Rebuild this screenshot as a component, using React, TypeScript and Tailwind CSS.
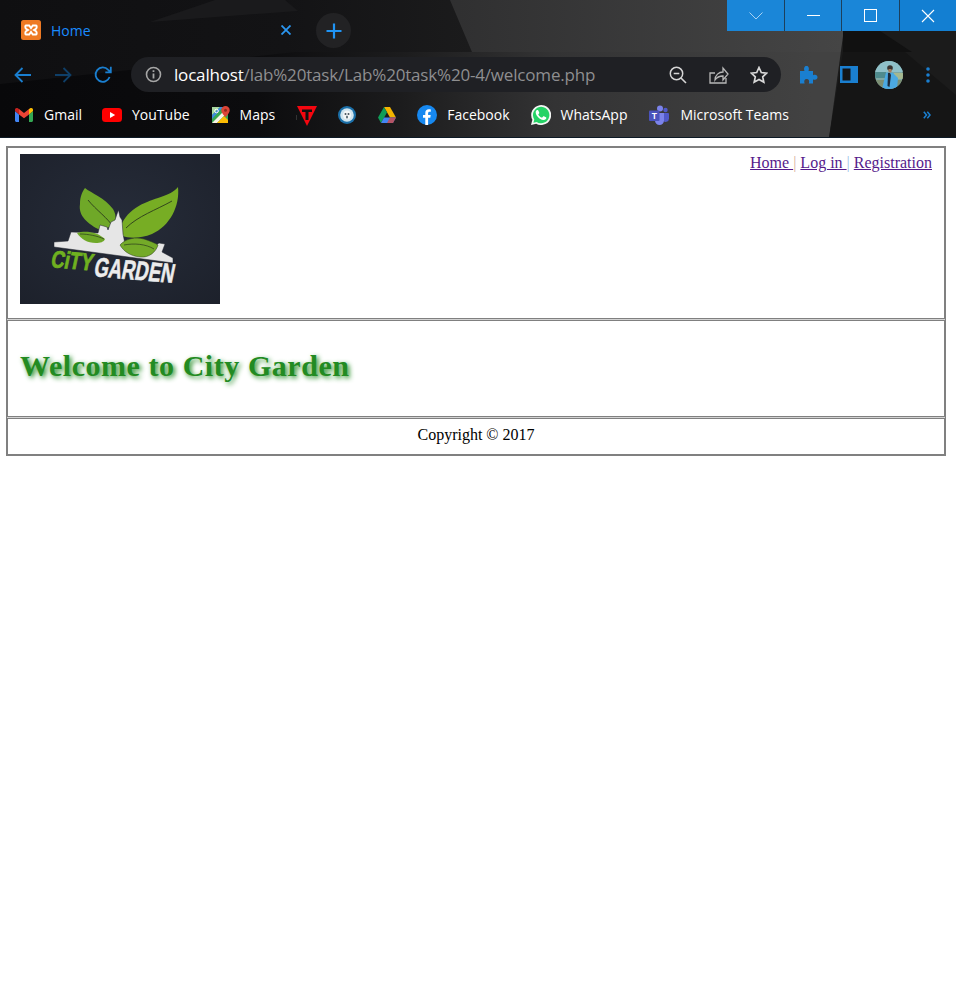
import React from "react";

const uiFont = "font-['Open_Sans','Noto_Sans',sans-serif]";

function Backdrop() {
  return (
    <svg className="absolute inset-0" width="956" height="138" viewBox="0 0 956 138">
      <defs>
        <linearGradient id="bd" x1="0" x2="1" y1="0" y2="0">
          <stop offset="0" stopColor="#08080a" />
          <stop offset="0.27" stopColor="#0c0c0e" />
          <stop offset="0.42" stopColor="#1c1c1d" />
          <stop offset="0.58" stopColor="#333334" />
          <stop offset="0.85" stopColor="#424242" />
        </linearGradient>
        <linearGradient id="tp" x1="0" x2="1" y1="0" y2="0">
          <stop offset="0" stopColor="#2f2f30" />
          <stop offset="1" stopColor="#464646" />
        </linearGradient>
        <linearGradient id="tl" x1="0" x2="1" y1="0" y2="0">
          <stop offset="0" stopColor="#0f0f11" />
          <stop offset="0.6" stopColor="#131315" />
          <stop offset="1" stopColor="#1b1b1c" />
        </linearGradient>
      </defs>
      <rect width="956" height="138" fill="url(#bd)" />
      <rect x="440" width="420" height="52" fill="url(#tp)" />
      <polygon points="0,0 450,0 472,52 295,52 0,84" fill="url(#tl)" />
      <polygon points="215,0 285,0 298,11 150,22" fill="#1a1a1c" />
      <polygon points="848,0 956,0 956,138 829,138" fill="#1b1b1b" />
      <polygon points="843,52 905,52 956,95 956,138 829,138" fill="#151515" />
      <polygon points="843,31 880,31 912,52 843,52" fill="#111111" />
      <rect y="137" width="956" height="1" fill="#0d1a26" />
    </svg>
  );
}

function XamppIcon() {
  return (
    <svg width="20" height="20" viewBox="0 0 20 20">
      <rect width="20" height="20" rx="2.500" fill="#ee7a24" />
      <path d="M5 5.500h3.200L10 8l1.800-2.500H15c1 0 1 3-.5 3.600L13 10l1.500.9C16 11.500 16 14.500 15 14.500h-3.200L10 12l-1.800 2.500H5c-1 0-1-3 .5-3.600L7 10l-1.500-.9C4 8.500 4 5.500 5 5.500Z" fill="none" stroke="#fff" strokeWidth="1.900" />
    </svg>
  );
}

function Gmail() {
  return (
    <svg width="18" height="14" viewBox="0 0 18 14">
      <path d="M0 3v9.500C0 13.300.7 14 1.500 14H4V6.500Z" fill="#4285f4" />
      <path d="M14 14h2.500c.8 0 1.500-.7 1.500-1.500V3l-4 3.500Z" fill="#34a853" />
      <path d="M14 1v5.500L18 3V1.800C18 .3 16.300-.5 15.200.3Z" fill="#fbbc04" />
      <path d="M4 6.500V1l5 4 5-4v5.500L9 10.300Z" fill="#ea4335" />
      <path d="M0 1.800V3l4 3.500V1L2.800.3C1.700-.5 0 .3 0 1.800Z" fill="#c5221f" />
    </svg>
  );
}

function YouTube() {
  return (
    <svg width="20" height="14" viewBox="0 0 20 14">
      <rect width="20" height="14" rx="3.500" fill="#ff0000" />
      <path d="M8 4l5.200 3L8 10Z" fill="#fff" />
    </svg>
  );
}

function Maps() {
  return (
    <svg width="18" height="18" viewBox="0 0 18 18">
      <rect y="1" width="16" height="16" fill="#36a852" />
      <path d="M0 1h8L0 9Z" fill="#a8d8a0" />
      <path d="M0 17 16 1v5L5 17Z" fill="#f8f4e8" />
      <path d="M5 17 12 10l4 4v3Z" fill="#fbbc04" />
      <path d="M0 9 8 1h3L0 13Z" fill="#4285f4" opacity="0.85" />
      <circle cx="4.500" cy="5" r="1.800" fill="none" stroke="#fff" strokeWidth="1" />
      <path d="M13.500 0A4.200 4.200 0 0 0 9.300 4.200c0 3 4.200 6.800 4.200 6.800s4.200-3.800 4.200-6.800A4.200 4.200 0 0 0 13.500 0Z" fill="#db4437" />
      <circle cx="13.500" cy="4.200" r="1.500" fill="#8f2a20" />
    </svg>
  );
}

function TIcon() {
  return (
    <svg width="22" height="21" viewBox="0 0 22 21">
      <path d="M1 1h20L11 21Z" fill="#f4060f" />
      <path d="M6 4.500h10v2.500h-3.500v8h-3V7H6Z" fill="#111" />
      <rect x="0" y="10" width="1" height="5" fill="#333" />
    </svg>
  );
}

function Shield() {
  return (
    <svg width="18" height="18" viewBox="0 0 18 18">
      <circle cx="9" cy="9" r="9" fill="#1b6fa8" />
      <circle cx="9" cy="9" r="6.800" fill="#cfe4ef" />
      <ellipse cx="9" cy="9" rx="4" ry="4.500" fill="#f4f6f7" />
      <circle cx="7.500" cy="8" r="1" fill="#44525c" />
      <circle cx="10.500" cy="8" r="1" fill="#44525c" />
      <ellipse cx="9" cy="11" rx="1" ry="1.500" fill="#5a6b75" />
    </svg>
  );
}

function Drive() {
  return (
    <svg width="18" height="16" viewBox="0 0 18 16">
      <path d="M6 0h6l6 10.500h-6Z" fill="#f4b400" />
      <path d="M6 0 0 10.500 3 16l6-10.500Z" fill="#0f9d58" />
      <path d="M3 16h12l3-5.500H6Z" fill="#4285f4" />
      <path d="M12 10.500 18 10.500 15 16 9 16Z" fill="#db4437" opacity="0.75" />
    </svg>
  );
}

function Facebook() {
  return (
    <svg width="20" height="20" viewBox="0 0 20 20">
      <circle cx="10" cy="10" r="10" fill="#1688f0" />
      <path d="M8.300 20v-7.200H6V10h2.300V7.900C8.300 5.500 9.700 4.300 11.800 4.300c1 0 2 .2 2 .2v2.300h-1.200c-1.100 0-1.500.7-1.500 1.400V10h2.600l-.4 2.800h-2.200V20Z" fill="#fff" />
    </svg>
  );
}

function WhatsApp() {
  return (
    <svg width="20" height="20" viewBox="0 0 20 20">
      <path d="M0 20l1.400-5.200A10 10 0 1 1 5.200 18.700Z" fill="#f4f6f4" />
      <path d="M2.400 17.700l.9-3.200a8.200 8.200 0 1 1 2.400 2.400Z" fill="#25d366" />
      <path d="M7.300 5.600c-.3-.5-.6-.5-.9-.5-.7 0-1.700.8-1.700 2.300 0 2.600 3.600 7 7.600 7.700 1.900.2 3-1 3-2 0-.4 0-.6-.4-.8l-2-1c-.4-.1-.6 0-.8.2l-.8 1c-.2.200-.4.200-.7.100-1.200-.5-2.500-1.600-3.200-2.900-.1-.3 0-.5.100-.6l.6-.7c.2-.3.2-.5.100-.8Z" fill="#fff" />
    </svg>
  );
}

function Teams() {
  return (
    <svg width="20" height="20" viewBox="0 0 20 20">
      <circle cx="11" cy="3.500" r="3" fill="#7b83eb" />
      <circle cx="16.500" cy="5" r="2.200" fill="#5059c9" />
      <path d="M13.500 8H19a1 1 0 0 1 1 1v4.500a3.500 3.500 0 0 1-6.500 1.800Z" fill="#5059c9" />
      <path d="M6 8h9v7.500a4.500 4.500 0 0 1-9 0Z" fill="#7b83eb" />
      <rect x="0" y="5.500" width="10.500" height="10.500" rx="1" fill="#4b53bc" />
      <text x="5.250" y="14" textAnchor="middle" fontSize="8.500" fontWeight="700" fill="#fff" fontFamily="'Liberation Sans',sans-serif">T</text>
    </svg>
  );
}

function Avatar() {
  return (
    <svg width="28" height="28" viewBox="0 0 28 28">
      <defs>
        <clipPath id="av"><circle cx="14" cy="14" r="14" /></clipPath>
      </defs>
      <g clipPath="url(#av)">
        <rect width="28" height="28" fill="#7fa8a4" />
        <rect y="0" width="28" height="11" fill="#8fc0c8" />
        <rect y="11" width="11" height="6" fill="#4f8b8e" />
        <rect x="19" y="12" width="9" height="6" fill="#a5b890" />
        <rect y="19" width="28" height="9" fill="#7c8f74" />
        <path d="M7 28 11 11.500h6.500L23 17l-1 11Z" fill="#4ba9e2" />
        <path d="M13 12h2l1 2-1.500 12-2-1Z" fill="#1d2a3a" />
        <circle cx="15" cy="7" r="2.800" fill="#3a3430" />
        <rect x="13.500" y="8" width="3" height="3.500" fill="#a67c5c" />
      </g>
    </svg>
  );
}

function Bookmark({ icon, label, gap }: { icon: React.ReactNode; label?: string; gap: string }) {
  return (
    <div className={`flex items-center ${gap}`}>
      {icon}
      {label && <span className="text-[14px] leading-5 text-white">{label}</span>}
    </div>
  );
}

function BrowserChrome() {
  const blue = "#1a7fd0";
  return (
    <header className={`relative h-[138px] overflow-hidden ${uiFont}`}>
      <Backdrop />
      <div className="absolute right-0 top-0 flex h-[31px] w-[229px] bg-[#1a86d8]">
        <div className="flex w-[58px] items-center justify-center border-r border-[#1c3f5c]">
          <svg width="14" height="8" viewBox="0 0 14 8"><path d="M.5.500 7 7 13.500.500" fill="none" stroke="#a8d2f2" strokeWidth="1" /></svg>
        </div>
        <div className="flex w-[57px] items-center justify-center border-r border-[#1c3f5c]">
          <div className="h-px w-[13px] bg-white" />
        </div>
        <div className="flex w-[58px] items-center justify-center border-r border-[#1c3f5c]">
          <div className="h-[13px] w-[13px] border border-white" />
        </div>
        <div className="flex flex-1 items-center justify-center bg-[#137fd2]">
          <svg width="14" height="14" viewBox="0 0 14 14"><path d="M1 1l12 12M13 1 1 13" stroke="#fff" strokeWidth="1.100" /></svg>
        </div>
      </div>

      <div className="relative flex flex-col">
        <div className="flex h-[52px] items-end pl-[7px]">
          <div className="flex h-[42px] w-[297px] items-center pb-[2px] pl-[14px] pr-[13px]">
            <XamppIcon />
            <span className="ml-[10px] flex-1 text-[14px] text-[#1a8cff]">Home</span>
            <svg width="10" height="10" viewBox="0 0 10 10"><path d="M.5.500l9 9M9.500.500l-9 9" stroke="#2b96f0" strokeWidth="1.800" /></svg>
          </div>
          <div className="mb-[4px] ml-[12px] flex h-[35px] w-[35px] items-center justify-center rounded-full bg-[#222224]">
            <svg width="16" height="16" viewBox="0 0 16 16"><path d="M8 .500v15M.500 8h15" stroke="#1f94f5" strokeWidth="2.200" /></svg>
          </div>
        </div>

        <div className="mt-[5px] flex h-[35px] items-center">
          <div className="flex w-[131px] items-center">
            <svg className="ml-[14px]" width="18" height="16" viewBox="0 0 18 16"><path d="M17 8H2M8.500 1 1.500 8l7 7" fill="none" stroke={blue} strokeWidth="1.800" /></svg>
            <svg className="ml-[22px]" width="18" height="16" viewBox="0 0 18 16"><path d="M1 8h15M9.500 1l7 7-7 7" fill="none" stroke="#0f3f68" strokeWidth="1.800" /></svg>
            <svg className="ml-[22px]" width="18" height="18" viewBox="0 0 18 18"><path d="M15.600 11A7.200 7.200 0 1 1 14.200 3.800L16.500 6M16.800 .8V6.300h-5.500" fill="none" stroke={blue} strokeWidth="1.800" /></svg>
          </div>
          <div className="flex h-[35px] w-[650px] items-center rounded-full bg-[#1f2024]">
            <svg className="ml-[14px]" width="17" height="17" viewBox="0 0 17 17"><circle cx="8.500" cy="8.500" r="7" fill="none" stroke="#a6a6a6" strokeWidth="1.600" /><path d="M8.500 7.500v5M8.500 4.300v1.700" stroke="#a6a6a6" strokeWidth="1.800" /></svg>
            <span className="ml-[12px] flex-1 whitespace-nowrap text-[17px] tracking-[-0.18px] text-[#8e8e90]"><span className="text-white">localhost</span>/lab%20task/Lab%20task%20-4/welcome.php</span>
            <svg className="mr-[22px]" width="18" height="18" viewBox="0 0 18 18"><circle cx="7.500" cy="7.500" r="6.200" fill="none" stroke="#d6d6d6" strokeWidth="1.500" /><path d="M4.700 7.500h5.600M12 12l5 5" stroke="#d6d6d6" strokeWidth="1.600" /></svg>
            <svg className="mr-[21px]" width="20" height="18" viewBox="0 0 20 18"><path d="M6 17H1V7h5M6 17h11v-5M6 14c0-5 4-8 8-8V2l5 6-5 6v-4c-3 0-6 1-8 4Z" fill="none" stroke="#b8b8b8" strokeWidth="1.300" /></svg>
            <svg className="mr-[13px]" width="18" height="18" viewBox="0 0 18 18"><path d="M9 1.500l2.300 5 5.400.6-4 3.700 1.100 5.400L9 13.500l-4.800 2.700 1.100-5.400-4-3.700 5.400-.6Z" fill="none" stroke="#d8d8d8" strokeWidth="1.700" /></svg>
          </div>
          <svg className="ml-[18px]" width="19" height="19" viewBox="0 0 19 19"><path d="M1 6h4.500C4.500 3 5.500 1 7.500 1s3 2 2 5H14v4.200c2.700-1 4.500 0 4.500 2.100s-1.800 3.100-4.500 2.100V18.500H9.800c1-2.700 0-4.500-2.100-4.500s-3.100 1.800-2.100 4.500H1Z" fill="#1a7fd0" /></svg>
          <svg className="ml-[22px]" width="18" height="17" viewBox="0 0 18 17"><rect width="18" height="17" fill="#1a7fd0" /><rect x="2.500" y="2.500" width="8" height="12" fill="#141416" /></svg>
          <div className="ml-[17px]"><Avatar /></div>
          <svg className="ml-[23px]" width="4" height="16" viewBox="0 0 4 16"><circle cx="2" cy="2" r="1.800" fill="#1a7fd0" /><circle cx="2" cy="8" r="1.800" fill="#1a7fd0" /><circle cx="2" cy="14" r="1.800" fill="#1a7fd0" /></svg>
        </div>

        <div className="mt-[5px] flex h-[36px] items-center pl-[15px]">
          <Bookmark icon={<Gmail />} label="Gmail" gap="gap-[11px]" />
          <div className="ml-[20px]"><Bookmark icon={<YouTube />} label="YouTube" gap="gap-[10px]" /></div>
          <div className="ml-[22px]"><Bookmark icon={<Maps />} label="Maps" gap="gap-[10px]" /></div>
          <div className="ml-[21px]"><Bookmark icon={<TIcon />} gap="gap-0" /></div>
          <div className="ml-[20px]"><Bookmark icon={<Shield />} gap="gap-0" /></div>
          <div className="ml-[22px]"><Bookmark icon={<Drive />} gap="gap-0" /></div>
          <div className="ml-[21px]"><Bookmark icon={<Facebook />} label="Facebook" gap="gap-[10px]" /></div>
          <div className="ml-[21px]"><Bookmark icon={<WhatsApp />} label="WhatsApp" gap="gap-[10px]" /></div>
          <div className="ml-[22px]"><Bookmark icon={<Teams />} label="Microsoft Teams" gap="gap-[11px]" /></div>
          <svg className="ml-[134px]" width="8" height="8" viewBox="0 0 8 8"><path d="M.8.800 3.500 4 .8 7.200M4.300.800 7 4 4.300 7.200" fill="none" stroke="#1a7fd0" strokeWidth="1.500" /></svg>
        </div>
      </div>
    </header>
  );
}

function Logo() {
  return (
    <svg width="200" height="150" viewBox="0 0 200 150" className="block">
      <defs>
        <radialGradient id="lg" cx="0.5" cy="0.45" r="0.8">
          <stop offset="0" stopColor="#262c39" />
          <stop offset="1" stopColor="#1c202a" />
        </radialGradient>
      </defs>
      <rect width="200" height="150" fill="url(#lg)" />
      <path d="M65 34C71 39 85 44 93 55C97 62 96 68 93 72L80 76C68 70 58 62 60 50C60 43 62 38 65 34Z" fill="#6fa828" />
      <path d="M100 76C104 56 125 48 138 44C148 41 155 37 158 33C160 52 150 72 132 80C120 85 108 84 103 82Z" fill="#77ad24" />
      <path d="M68 46C76 56 88 64 94 74M106 74C118 62 136 56 152 47" fill="none" stroke="#2a3a1c" strokeWidth="0.900" />
      <path d="M34 88 48 87 51 78 78 79 80 71 87 73 88 76 91 68 95 66 97 60 98.500 56 100 63 102 66 103 80 105 90 135 92 139 89 145 90 142 98 153 104 153 109 34 93Z" fill="#e6e6e6" stroke="#1c202a" strokeWidth="0.500" />
      <path d="M57 79C65 76 78 78 85 85C84 88 80 89 76 89C67 89 61 85 57 79Z" fill="#6fa828" />
      <path d="M100 91C106 84 116 83 124 85C130 87 135 89 138 91C136 98 129 104 120 103C111 102 104 98 100 91Z" fill="#74aa28" stroke="#2a3a1c" strokeWidth="0.500" />
      <path d="M60 80C68 80 78 82 84 85M104 91C114 89 126 90 134 95" fill="none" stroke="#2a3a1c" strokeWidth="0.700" />
      <text transform="translate(30 113) rotate(5) skewX(-7)" fontFamily="'Liberation Sans',sans-serif" fontSize="24" fontWeight="700" fill="#6fb020" stroke="#6fb020" strokeWidth="0.800" textLength="42" lengthAdjust="spacingAndGlyphs">CiTY</text>
      <text transform="translate(73 122) rotate(5) skewX(-7)" fontFamily="'Liberation Sans',sans-serif" fontSize="27" fontWeight="700" fill="#ececec" stroke="#ececec" strokeWidth="0.600" textLength="80" lengthAdjust="spacingAndGlyphs">GARDEN</text>
    </svg>
  );
}

export default function App() {
  return (
    <div className="min-h-[982px] bg-white font-['Liberation_Serif',serif] text-[16px] text-black">
      <BrowserChrome />
      <main className="ml-[6px] mt-2 flex w-[940px] flex-col gap-px border border-[#808080] bg-[#d4d4d4]">
        <section className="flex h-[172px] justify-between border border-[#808080] bg-white pl-[12px] pr-[12px] pt-[6px]">
          <Logo />
          <nav className="leading-[18px]">
            <a className="text-[#551a8b] underline" href="#home">Home </a>
            <span className="text-[#d8b49c]">|</span>{" "}
            <a className="text-[#551a8b] underline" href="#login">Log in </a>
            <span className="text-[#9cc4e8]">|</span>{" "}
            <a className="text-[#551a8b] underline" href="#reg">Registration</a>
          </nav>
        </section>
        <section className="flex h-[97px] items-center border border-[#808080] bg-white pb-[6px] pl-[12px]">
          <h1 className="text-[30px] font-bold tracking-[0.55px] text-[#228b22] [text-shadow:2px_2px_5px_#228b22]">Welcome to City Garden</h1>
        </section>
        <section className="flex h-[37px] items-center justify-center border border-[#808080] bg-white pb-[3px]">
          <p>Copyright © 2017</p>
        </section>
      </main>
    </div>
  );
}
